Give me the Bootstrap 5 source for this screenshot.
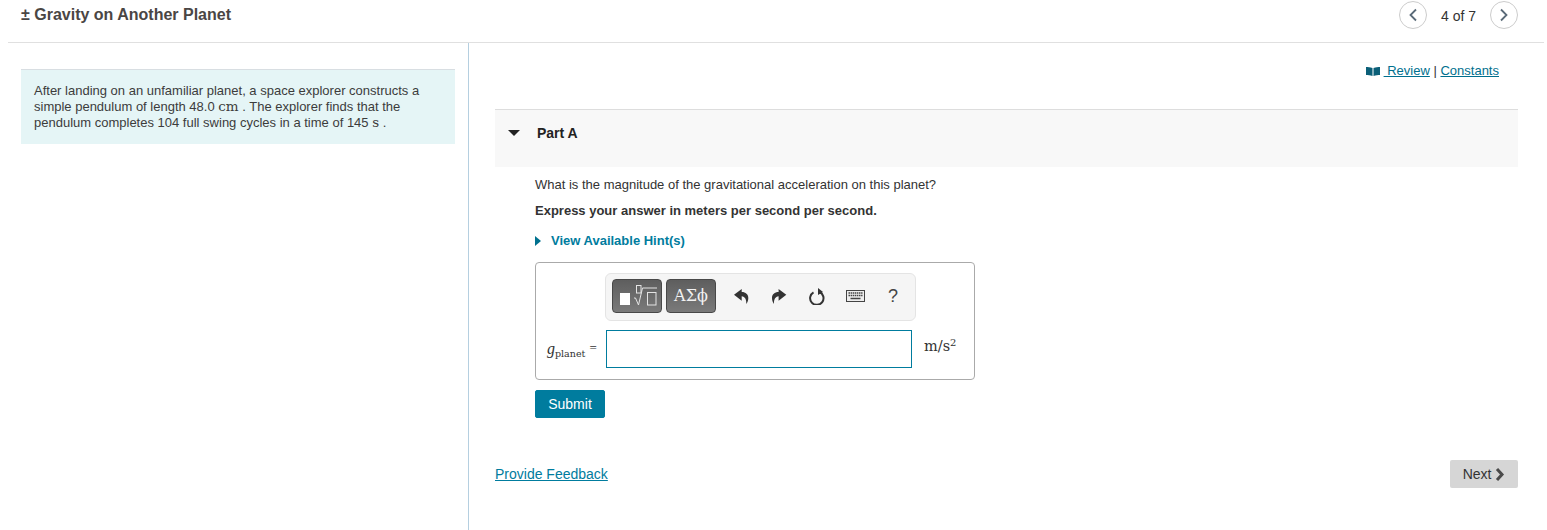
<!DOCTYPE html>
<html lang="en">
<head>
    <meta charset="UTF-8">
    <meta name="viewport" content="width=device-width, initial-scale=1.0">
    <title>Gravity on Another Planet</title>
    <link href="https://cdn.jsdelivr.net/npm/bootstrap@5.3.0/dist/css/bootstrap.min.css" rel="stylesheet">
    <style>
        html, body { height: 530px; overflow: hidden; }
        body { font-family: "Liberation Sans", Arial, sans-serif; font-size: 14px; color: #333; background: #fff; }
        a { color: #007c9e; }
        .top-bar { height: 43px; margin: 0 3px 0 8px; padding: 0 26px 0 13px; border-bottom: 1px solid #e0e0e0; }
        .item-title { font-size: 16px; font-weight: 700; color: #4a4644; line-height: 18px; margin: 6px 0 0; }
        .pager-text { font-size: 14px; color: #333; margin: 0 14px; line-height: 31px; }
        .pager-btn { width: 28px; height: 28px; padding: 0; border: 1px solid #ccc; border-radius: 50%; background: #fff; display: flex; align-items: center; justify-content: center; }
        .pager-row { margin-top: 1px; }
        .panes { height: 487px; }
        .left-pane { width: 469px; flex: none; border-right: 1px solid #b5cfe0; padding: 26px 13px 0 21px; }
        .intro-box { background: #e5f5f6; border-top: 1px solid #d8dee2; padding: 13px 13px 13px; line-height: 16px; font-size: 13px; color: #3c3c3c; height: 75px; }
        .math-txt { font-family: "DejaVu Serif", serif; font-size: 13.5px; line-height: 1; }
        .right-pane { padding: 0 29px 0 26px; min-width: 0; }
        .review-links { text-align: right; padding: 20px 19px 0 0; line-height: 16px; height: 66px; font-size: 13px; }
        .review-links a { color: #006f8e; }
        .part-head { height: 58px; background: #f8f8f8; border-top: 1px solid #ddd; padding: 15px 0 0 13px; font-weight: 700; color: #222; line-height: 16px; }
        .caret-down { width: 0; height: 0; border-left: 6px solid transparent; border-right: 6px solid transparent; border-top: 6px solid #222; margin: 5px 17px 0 0; }
        .part-body { padding: 10px 0 0 40px; font-size: 13px; }
        .question { line-height: 16px; margin: 0 0 10px; }
        .express { line-height: 16px; font-weight: 700; margin: 0 0 14px; }
        .hint-link { line-height: 16px; font-weight: 700; color: #007c9e; text-decoration: none; }
        .caret-right { width: 0; height: 0; border-top: 5px solid transparent; border-bottom: 5px solid transparent; border-left: 6px solid #00718f; margin: 3px 10px 0 0; }
        .answer-box { width: 440px; height: 118px; border: 1px solid #aaa; border-radius: 4px; margin-top: 13px; padding: 10px 12px 0 11px; }
        .math-bar { width: 311px; height: 48px; margin-left: 58px; padding: 5px 0 5px 6px; background: #f5f5f5; border: 1px solid #e4e4e4; border-radius: 6px; }
        .tpl-btn { flex: none; height: 34px; padding: 0; border: 1px solid #484848; border-radius: 4px; background: linear-gradient(#5e5e5e, #7a7a7a); color: #f2f2f2; display: flex; align-items: center; justify-content: center; }
        .tpl-root { width: 50px; margin-right: 4px; }
        .tpl-greek { width: 50px; font-family: "DejaVu Serif", serif; font-size: 16px; }
        .tool-slot { flex: none; width: 38px; height: 34px; display: flex; align-items: center; justify-content: center; color: #444; }
        .tool-first { margin-left: 6px; }
        .tool-help { font-size: 18px; }
        .answer-row { margin-top: 9px; }
        .var-label { width: 59px; flex: none; font-family: "Liberation Serif", serif; font-size: 13px; color: #333; white-space: nowrap; padding-top: 7px; }
        .var-label i { font-size: 16px; }
        .var-label sub { bottom: -.3em; font-family: "DejaVu Serif", serif; font-size: 9.500px; margin-right: 1px; }
        .equals-mark { vertical-align: 2px; }
        .answer-input { width: 306px; height: 38px; border: 1px solid #007c9e; border-radius: 0; padding: 0 6px; outline: 0; }
        .unit-label { margin-left: 12px; font-family: "DejaVu Serif", serif; font-size: 14.500px; padding-top: 6px; }
        .unit-label sup { font-size: 10px; }
        .btn-submit { width: 70px; height: 28px; margin-top: 10px; padding: 0; font-size: 14px; border-radius: 2px; background: #007c9e; border-color: #007c9e; color: #fff; display: block; }
        .foot-row { margin-top: 42px; font-size: 14px; }
        .btn-next { width: 68px; height: 28px; padding: 0; font-size: 14px; border: 0; border-radius: 2px; background: #d6d6d6; color: #333; }
    </style>
</head>
<body>
    <div class="top-bar d-flex justify-content-between">
        <h1 class="item-title">± Gravity on Another Planet</h1>
        <div class="pager-row d-flex align-items-start">
            <button class="pager-btn" type="button" aria-label="Previous">
                <svg width="10" height="14" viewBox="0 0 10 14"><path d="M8 1.500 2.500 7 8 12.500" fill="none" stroke="#5a6a78" stroke-width="1.800"/></svg>
            </button>
            <span class="pager-text">4 of 7</span>
            <button class="pager-btn" type="button" aria-label="Next">
                <svg width="10" height="14" viewBox="0 0 10 14"><path d="M2 1.500 7.500 7 2 12.500" fill="none" stroke="#5a6a78" stroke-width="1.800"/></svg>
            </button>
        </div>
    </div>

    <div class="panes d-flex">
        <div class="left-pane">
            <div class="intro-box">
                After landing on an unfamiliar planet, a space explorer constructs a simple pendulum of length 48.0 <span class="math-txt">cm</span> . The explorer finds that the pendulum completes 104 full swing cycles in a time of 145 <span class="math-txt">s</span> .
            </div>
        </div>

        <div class="right-pane flex-grow-1">
            <div class="review-links">
                <svg width="14" height="9" viewBox="0 0 14 9"><path d="M0 0c2 0 4 0 6.500 1v8C4 8 2 8 0 8zM14 0c-2 0-4 0-6.500 1v8c2.500-1 4.500-1 6.500-1z" fill="#0b5f78"/></svg>
                <a href="#">&nbsp;Review</a> | <a href="#">Constants</a>
            </div>

            <div class="part-head d-flex">
                <span class="caret-down"></span>
                <span>Part A</span>
            </div>

            <div class="part-body">
                <p class="question">What is the magnitude of the gravitational acceleration on this planet?</p>
                <p class="express">Express your answer in meters per second per second.</p>
                <a class="hint-link d-flex" href="#"><span class="caret-right"></span>View Available Hint(s)</a>

                <div class="answer-box">
                    <div class="math-bar d-flex">
                        <button class="tpl-btn tpl-root" type="button" aria-label="Templates">
                            <svg width="48" height="32" viewBox="1 1 48 32">
                                <rect x="8" y="14" width="10" height="12" fill="#fff"/>
                                <path d="M22 19h1.500l3 7 4-17h14.500" fill="none" stroke="#e4e4e4"/>
                                <rect x="24.500" y="6.500" width="4.500" height="7.500" fill="none" stroke="#e4e4e4"/>
                                <rect x="35.500" y="13.500" width="8.500" height="12.500" fill="none" stroke="#e4e4e4"/>
                            </svg>
                        </button>
                        <button class="tpl-btn tpl-greek" type="button">ΑΣϕ</button>
                        <span class="tool-slot tool-first">
                            <svg width="15" height="15" viewBox="0 0 15 15"><path d="M0 5.700 7.700 0v3c4 0 6.600 2.500 6.600 6 0 2.300-.8 4.500-2 6 .3-4-1.300-7.700-4.600-7.700v4.400z" fill="#333"/></svg>
                        </span>
                        <span class="tool-slot">
                            <svg width="15" height="15" viewBox="0 0 15 15"><path d="M14.300 5.700 6.600 0v3C2.600 3 0 5.500 0 9c0 2.300.8 4.500 2 6-.3-4 1.300-7.700 4.600-7.700v4.400z" fill="#333"/></svg>
                        </span>
                        <span class="tool-slot">
                            <svg width="16" height="17" viewBox="0 0 16 17"><path d="M4.500 4.300a6.700 6.700 0 1 0 6 -.3" fill="none" stroke="#333" stroke-width="2"/><path d="M9 0v7l5-3z" fill="#333"/></svg>
                        </span>
                        <span class="tool-slot">
                            <svg width="19" height="12" viewBox="0 0 19 12"><rect x=".5" y=".5" width="18" height="11" fill="#eee" stroke="#444"/><path d="M2.500 3h14M2.500 5.500h14" stroke="#444" stroke-width="1.500" stroke-dasharray="1.500 .6"/><path d="M4.500 8.500h10" stroke="#444" stroke-width="1.500"/></svg>
                        </span>
                        <span class="tool-slot tool-help">?</span>
                    </div>

                    <div class="answer-row d-flex align-items-start">
                        <span class="var-label"><i>g</i><sub>planet</sub> <span class="equals-mark">=</span></span>
                        <input class="answer-input" type="text" aria-label="Answer">
                        <span class="unit-label">m/s<sup>2</sup></span>
                    </div>
                </div>

                <button class="btn btn-submit" type="button">Submit</button>
            </div>

            <div class="foot-row d-flex justify-content-between align-items-center">
                <a href="#">Provide Feedback</a>
                <button class="btn btn-next" type="button">Next <svg width="10" height="13" viewBox="0 0 10 13"><path d="M2 1l5 5.500L2 12" fill="none" stroke="#4a4a4a" stroke-width="3"/></svg></button>
            </div>
        </div>
    </div>

    <script src="https://cdn.jsdelivr.net/npm/bootstrap@5.3.0/dist/js/bootstrap.bundle.min.js"></script>
</body>
</html>
